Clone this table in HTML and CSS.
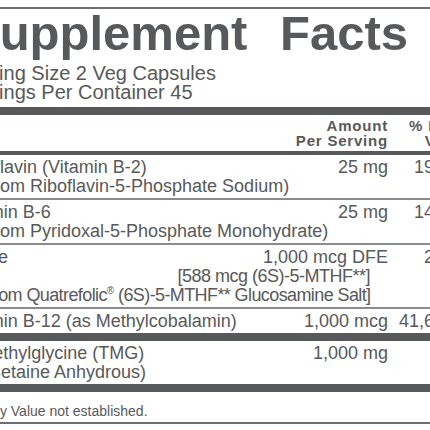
FILE: index.html
```html
<!DOCTYPE html>
<html lang="en">
<head>
  <meta charset="UTF-8" />
  <meta name="viewport" content="width=device-width, initial-scale=1.0" />
  <title>Supplement Facts</title>
  <link rel="stylesheet" href="styles.css">
</head>
<body>
  <div class="label">
    <div class="title">Supplement Facts</div>
    <div class="serving">
      Serving Size 2 Veg Capsules<br />
      Servings Per Container 45
    </div>
    <div class="bar thick"></div>

    <div class="row head">
      <span></span>
      <span class="amt">Amount<br />Per Serving</span>
      <span class="dv">% Daily<br />Value</span>
    </div>
    <div class="bar medium"></div>

    <div class="row">
      <span>Riboflavin (Vitamin B-2)</span>
      <span class="amt">25 mg</span>
      <span class="dv">1923%</span>
      <span class="sub">(from Riboflavin-5-Phosphate Sodium)</span>
    </div>
    <div class="bar thin"></div>

    <div class="row">
      <span>Vitamin B-6</span>
      <span class="amt">25 mg</span>
      <span class="dv">1471%</span>
      <span class="sub">(from Pyridoxal-5-Phosphate Monohydrate)</span>
    </div>
    <div class="bar thin"></div>

    <div class="row">
      <span>Folate</span>
      <span class="amt">1,000 mcg DFE</span>
      <span class="dv">250%</span>
      <span class="note">[588 mcg (6S)-5-MTHF**]</span>
      <span class="sub tight">(from Quatrefolic<sup>®</sup> (6S)-5-MTHF** Glucosamine Salt]</span>
    </div>
    <div class="bar thin"></div>

    <div class="row">
      <span>Vitamin B-12 (as Methylcobalamin)</span>
      <span class="amt">1,000 mcg</span>
      <span class="dv">41,667%</span>
    </div>
    <div class="bar thick"></div>

    <div class="row">
      <span>Trimethylglycine (TMG)</span>
      <span class="amt">1,000 mg</span>
      <span class="dv">†</span>
      <span class="sub">(Betaine Anhydrous)</span>
    </div>
    <div class="bar thick"></div>

    <div class="footnote">†Daily Value not established.</div>
    <div class="bar edge"></div>
  </div>
</body>
</html>
```

FILE: styles.css
```css
html, body {
  margin: 0;
  overflow: hidden;
  background: #fff;
}
body {
  width: 430px;
  height: 430px;
}
.label {
  margin-top: 7px;
  margin-left: -42px;
  width: 512px;
  font-family: "Liberation Sans", Arial, sans-serif;
  color: #58595b;
  border-top: 2px solid #6d6e71;
}
.title {
  padding-left: 9px;
  font-size: 49px;
  font-weight: bold;
  line-height: 48px;
  word-spacing: 19px;
  white-space: nowrap;
}
.serving {
  margin-top: 7px;
  padding-bottom: 5px;
  font-size: 20px;
  line-height: 19px;
}
.bar {
  margin-left: -20px;
  width: 560px;
}
.bar.thick {
  height: 8px;
  background: #58595b;
}
.bar.medium {
  height: 4px;
  background: #58595b;
}
.bar.thin {
  height: 2px;
  background: #8a8b8d;
}
.bar.edge {
  height: 2px;
  background: #6d6e71;
}
.row {
  display: grid;
  grid-template-columns: 1fr auto 82px;
  padding: 3px 0 2px;
  font-size: 18px;
  line-height: 19px;
  white-space: nowrap;
}
.amt {
  text-align: right;
}
.dv {
  text-align: right;
}
.sub {
  grid-column: 1 / -1;
  padding-left: 25px;
}
.sub.tight {
  letter-spacing: -0.6px;
}
.note {
  grid-column: 1 / 3;
  text-align: right;
  padding-right: 18px;
  letter-spacing: -0.5px;
}
sup {
  font-size: 10px;
  line-height: 0;
}
.row.head {
  padding: 4px 0 3px;
  font-size: 15px;
  line-height: 14.5px;
  font-weight: bold;
  letter-spacing: 0.8px;
}
.row.head .dv {
  padding-right: 2px;
}
.footnote {
  padding: 11px 0 3px 10px;
  font-size: 14px;
  line-height: 16px;
}
```
